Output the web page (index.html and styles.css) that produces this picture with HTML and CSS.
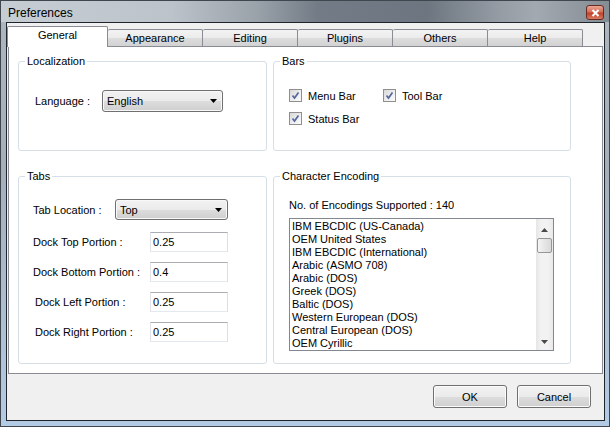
FILE: index.html
```html
<!DOCTYPE html>
<html>
    <head>
        <title>Preferences</title>
        <link rel="stylesheet" href="styles.css">
    </head>
    <body>
        <div class="window">
            <div class="titlebar">
                <span class="title">Preferences</span>
                <div class="close">
                    <svg width="9" height="8" viewBox="0 0 9 8">
                        <path d="M1.5 1 L7.5 7 M7.5 1 L1.5 7" stroke="#fff" stroke-width="2" />
                    </svg>
                </div>
            </div>

            <div class="client">
                <div class="tabstrip">
                    <div class="tab active">General</div>
                    <div class="tab">Appearance</div>
                    <div class="tab">Editing</div>
                    <div class="tab">Plugins</div>
                    <div class="tab">Others</div>
                    <div class="tab">Help</div>
                </div>

                <div class="panel">
                    <!-- localization -->
                    <fieldset class="group">
                        <legend>Localization</legend>
                        <div class="row loc-row">
                            <span class="lbl lang-lbl">Language :</span>
                            <div class="combo lang-combo">
                                <span>English</span>
                                <svg width="7" height="4" viewBox="0 0 7 4"><path d="M0 0 H7 L3.5 4 Z" fill="#000" /></svg>
                            </div>
                        </div>
                    </fieldset>

                    <!-- bars -->
                    <fieldset class="group">
                        <legend>Bars</legend>
                        <div class="checks">
                            <div class="check-item">
                                <span class="box"><svg width="9" height="9" viewBox="0 0 9 9"><path d="M1.5 4.5 L3.5 7 L7.5 1.5" /></svg></span>
                                <span>Menu Bar</span>
                            </div>
                            <div class="check-item">
                                <span class="box"><svg width="9" height="9" viewBox="0 0 9 9"><path d="M1.5 4.5 L3.5 7 L7.5 1.5" /></svg></span>
                                <span>Tool Bar</span>
                            </div>
                            <div class="check-item">
                                <span class="box"><svg width="9" height="9" viewBox="0 0 9 9"><path d="M1.5 4.5 L3.5 7 L7.5 1.5" /></svg></span>
                                <span>Status Bar</span>
                            </div>
                        </div>
                    </fieldset>

                    <!-- tabs -->
                    <fieldset class="group">
                        <legend>Tabs</legend>
                        <div class="row tabloc-row">
                            <span class="lbl tabloc-lbl">Tab Location :</span>
                            <div class="combo tabloc-combo">
                                <span>Top</span>
                                <svg width="7" height="4" viewBox="0 0 7 4"><path d="M0 0 H7 L3.5 4 Z" fill="#000" /></svg>
                            </div>
                        </div>
                        <div class="row dock-row">
                            <span class="lbl dock-lbl">Dock Top Portion :</span>
                            <div class="text">0.25</div>
                        </div>
                        <div class="row dock-row">
                            <span class="lbl dock-lbl">Dock Bottom Portion :</span>
                            <div class="text">0.4</div>
                        </div>
                        <div class="row dock-row">
                            <span class="lbl dock-lbl indent">Dock Left Portion :</span>
                            <div class="text">0.25</div>
                        </div>
                        <div class="row dock-row">
                            <span class="lbl dock-lbl indent">Dock Right Portion :</span>
                            <div class="text">0.25</div>
                        </div>
                    </fieldset>

                    <!-- character encoding -->
                    <fieldset class="group">
                        <legend>Character Encoding</legend>
                        <div class="count">No. of Encodings Supported : 140</div>
                        <div class="list">
                            <ul class="items">
                                <li>IBM EBCDIC (US-Canada)</li>
                                <li>OEM United States</li>
                                <li>IBM EBCDIC (International)</li>
                                <li>Arabic (ASMO 708)</li>
                                <li>Arabic (DOS)</li>
                                <li>Greek (DOS)</li>
                                <li>Baltic (DOS)</li>
                                <li>Western European (DOS)</li>
                                <li>Central European (DOS)</li>
                                <li>OEM Cyrillic</li>
                            </ul>
                            <div class="scroll">
                                <div class="arrow up"><svg width="7" height="4" viewBox="0 0 7 4"><path d="M0 4 H7 L3.5 0 Z" fill="#4a4a4a" /></svg></div>
                                <div class="thumb"></div>
                                <div class="track"></div>
                                <div class="arrow down"><svg width="7" height="4" viewBox="0 0 7 4"><path d="M0 0 H7 L3.5 4 Z" fill="#4a4a4a" /></svg></div>
                            </div>
                        </div>
                    </fieldset>
                </div>

                <div class="footer">
                    <button class="btn">OK</button>
                    <button class="btn">Cancel</button>
                </div>
            </div>
        </div>
    </body>
</html>
```

FILE: styles.css
```css
* {
    margin: 0;
    padding: 0;
    box-sizing: border-box;
}

body {
    font-family: "Liberation Sans", Arial, sans-serif;
    font-size: 11px;
    color: #000;
    background: #fff;
}

/* window frame */
.window {
    width: 610px;
    height: 427px;
    border: 1px solid #3f464d;
    background: linear-gradient(180deg, #aeb6be 0%, #a4afba 40%, #b3cbe4 100%);
    display: flex;
    flex-direction: column;
}

.titlebar {
    height: 21px;
    flex: none;
    display: flex;
    justify-content: space-between;
    align-items: flex-start;
    padding: 4px 5px 0 7px;
    background: linear-gradient(90deg, #c6cdd3 0%, #bcc3ca 28%, #9aa2aa 42%, #737c86 52%, #6d7680 70%, #959ca4 82%, #a2a9b0 88%, #848c94 100%);
}

.title {
    font-size: 12px;
    line-height: 16px;
}

.close {
    width: 18px;
    height: 15px;
    border: 1px solid #6b2a20;
    border-radius: 3px;
    background: linear-gradient(180deg, #e8a595 0%, #d5705a 45%, #c2412a 55%, #d67a62 100%);
    display: flex;
    align-items: center;
    justify-content: center;
}

.client {
    flex: 1;
    margin: 0 4px 5px 5px;
    border: 1px solid #1f252b;
    background: #f0f0f0;
    padding-top: 3px;
    display: flex;
    flex-direction: column;
}

/* tabs */
.tabstrip {
    height: 20px;
    flex: none;
    display: flex;
    align-items: flex-end;
    position: relative;
    z-index: 1;
}

.tab {
    width: 95px;
    height: 17px;
    border: 1px solid #898c95;
    border-left: none;
    border-bottom: none;
    border-radius: 2px 2px 0 0;
    background: linear-gradient(180deg, #f3f3f3 0%, #ebebeb 50%, #dddddd 51%, #d2d2d2 100%);
    text-align: center;
    line-height: 16px;
}

.tab.active {
    width: 101px;
    height: 21px;
    margin-bottom: -1px;
    border-left: 1px solid #898c95;
    background: #fff;
    line-height: 17px;
}

.panel {
    margin-left: 1px;
    width: 595px;
    height: 328px;
    flex: none;
    border: 1px solid #898c95;
    background: #fff;
    padding: 8px 0 0 9px;
    display: grid;
    grid-template-columns: 249px 298px;
    grid-template-rows: 96px 194px;
    column-gap: 6px;
    row-gap: 19px;
    align-content: start;
}

/* group boxes */
.group {
    border: 1px solid #d5dfe5;
    border-radius: 3px;
    padding: 0 8px;
    min-width: 0;
}

.group legend {
    padding: 0 2px;
    margin-left: -2px;
    line-height: 13px;
}

.row {
    display: flex;
    align-items: center;
}

.lbl {
    flex: none;
}

.loc-row {
    margin-top: 22px;
    padding-left: 8px;
}

.lang-lbl {
    width: 67px;
}

.combo {
    display: flex;
    align-items: center;
    justify-content: space-between;
    border: 1px solid #707070;
    border-radius: 3px;
    padding: 0 5px 0 4px;
    background: linear-gradient(180deg, #f2f2f2 0%, #ebebeb 50%, #dddddd 51%, #cfcfcf 100%);
    box-shadow: inset 0 0 0 1px #f8f8f8;
}

.lang-combo {
    width: 121px;
    height: 22px;
}

.tabloc-row {
    margin-top: 16px;
    padding-left: 6px;
}

.tabloc-lbl {
    width: 82px;
}

.tabloc-combo {
    width: 113px;
    height: 21px;
}

.dock-row {
    margin-top: 10px;
    padding-left: 6px;
}

.tabloc-row + .dock-row {
    margin-top: 12px;
}

.dock-lbl {
    width: 117px;
}

.dock-lbl.indent {
    padding-left: 2px;
}

.text {
    width: 78px;
    height: 20px;
    border: 1px solid;
    border-color: #abadb3 #dbdfe6 #e3e9ef #e2e3ea;
    background: #fff;
    padding-left: 2px;
    line-height: 18px;
}

/* bars */
.checks {
    margin-top: 21px;
    padding-left: 7px;
    display: grid;
    grid-template-columns: 94px auto;
    row-gap: 10px;
}

.check-item {
    display: flex;
    align-items: center;
    gap: 6px;
    height: 13px;
}

.box {
    width: 13px;
    height: 13px;
    border: 1px solid #8f8f8f;
    background: linear-gradient(135deg, #d8d8d8 0%, #f0f0f0 60%, #fbfbfb 100%);
    display: flex;
    align-items: center;
    justify-content: center;
}

.box path {
    fill: none;
    stroke: #5467a0;
    stroke-width: 1.7;
}

/* encodings */
.count {
    margin-top: 16px;
    padding-left: 7px;
    line-height: 13px;
}

.list {
    margin: 6px 0 0 7px;
    width: 265px;
    height: 133px;
    border: 1px solid #828790;
    display: flex;
}

.items {
    flex: 1;
    list-style: none;
    padding: 1px 0 0 2px;
    line-height: 13px;
    white-space: nowrap;
    overflow: hidden;
}

.scroll {
    width: 17px;
    flex: none;
    display: flex;
    flex-direction: column;
    background: linear-gradient(90deg, #e6e6e6 0%, #f2f2f2 30%, #f2f2f2 70%, #e9e9e9 100%);
}

.arrow {
    height: 17px;
    flex: none;
    display: flex;
    justify-content: center;
    align-items: center;
}

.arrow.up {
    padding-top: 4px;
}

.thumb {
    height: 15px;
    margin: 2px 1px 0;
    border: 1px solid #979797;
    border-radius: 2px;
    background: linear-gradient(90deg, #f4f4f4 0%, #e6e6e6 50%, #d9d9d9 100%);
}

.track {
    flex: 1;
}

/* buttons */
.footer {
    flex: 1;
    display: flex;
    justify-content: flex-end;
    align-items: flex-start;
    gap: 10px;
    padding: 11px 13px 0 0;
}

.btn {
    width: 74px;
    height: 23px;
    border: 1px solid #707070;
    border-radius: 3px;
    background: linear-gradient(180deg, #f2f2f2 0%, #ebebeb 50%, #dddddd 51%, #cfcfcf 100%);
    box-shadow: inset 0 0 0 1px #fbfbfb;
    font: inherit;
    color: #000;
}
```
